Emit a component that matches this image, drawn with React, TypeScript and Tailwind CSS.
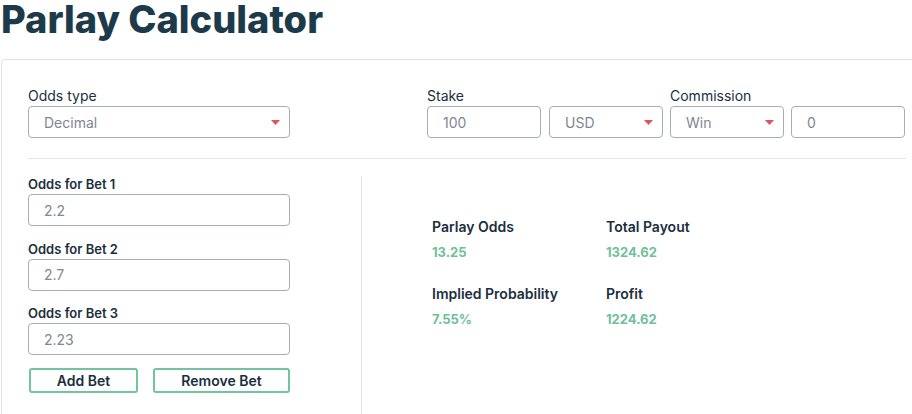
import { useState } from 'react'

const font = { fontFamily: 'Inter, "Noto Sans", sans-serif' }

function Caret() {
  return (
    <svg width="9" height="5" viewBox="0 0 9 5" className="shrink-0">
      <polygon points="0,0 9,0 4.5,5" fill="#e0525e" />
    </svg>
  )
}

function SelectBox({ value, className }: { value: string; className: string }) {
  return (
    <div className={`flex h-[32px] items-center justify-between rounded-[4px] border border-[#a7adb4] pl-[15px] pr-[9px] text-[14px] text-[#7f8791] ${className}`}>
      <span>{value}</span>
      <Caret />
    </div>
  )
}

function TextBox({ value, className }: { value: string; className: string }) {
  return (
    <div className={`flex h-[32px] items-center rounded-[4px] border border-[#a7adb4] pl-[15px] text-[14px] text-[#7f8791] ${className}`}>
      {value}
    </div>
  )
}

export default function App() {
  const [odds] = useState(['2.2', '2.7', '2.23'])

  const results = [
    { label: 'Parlay Odds', value: '13.25' },
    { label: 'Total Payout', value: '1324.62' },
    { label: 'Implied Probability', value: '7.55%' },
    { label: 'Profit', value: '1224.62' },
  ]

  return (
    <div className="h-[414px] w-[912px] overflow-hidden bg-white" style={font}>
      <h1 className="pl-[1px] text-[38px] leading-[38px] font-extrabold text-[#1d3a4b]">
        Parlay Calculator
      </h1>

      <div className="ml-[1px] mt-[21px] w-[940px] rounded-[4px] border border-[#dfe3e7] pl-[26px] pt-[26px]">
        {/* top row */}
        <div className="flex w-[878px] items-start">
          <div className="w-[262px]">
            <div className="text-[14px] leading-[20px] text-[#1b2f3d]">Odds type</div>
            <SelectBox value="Decimal" className="w-[262px]" />
          </div>
          <div className="ml-[137px]">
            <div className="text-[14px] leading-[20px] text-[#1b2f3d]">Stake</div>
            <div className="flex gap-[8px]">
              <TextBox value="100" className="w-[114px]" />
              <SelectBox value="USD" className="w-[114px]" />
            </div>
          </div>
          <div className="ml-[7px]">
            <div className="text-[14px] leading-[20px] text-[#1b2f3d]">Commission</div>
            <div className="flex gap-[7px]">
              <SelectBox value="Win" className="w-[114px]" />
              <TextBox value="0" className="w-[114px]" />
            </div>
          </div>
        </div>

        <div className="mt-[20px] h-px w-[878px] bg-[#e1e5e9]" />

        {/* bottom */}
        <div className="flex pt-[15px]">
          <div className="w-[262px]">
            {odds.map((o, i) => (
              <div key={i} className="mb-[12.5px]">
                <div className="text-[13px] leading-[20px] font-semibold text-[#1b2f3d]">Odds for Bet {i + 1}</div>
                <TextBox value={o} className="w-[262px]" />
              </div>
            ))}
            <div className="ml-[1px] mt-[2px] flex gap-[15px]">
              <button className="h-[25px] w-[109px] rounded-[3px] border-2 border-[#72c4a1] text-[14px] font-semibold text-[#1b2f3d]">
                Add Bet
              </button>
              <button className="h-[25px] w-[137px] rounded-[3px] border-2 border-[#72c4a1] text-[14px] font-semibold text-[#1b2f3d]">
                Remove Bet
              </button>
            </div>
            <div className="h-[40px]" />
          </div>

          <div className="ml-[71px] mt-[2px] border-l border-[#e1e5e9] pl-[70px] pt-[41px]">
            <div className="grid grid-cols-[174px_174px] gap-y-[22px]">
              {results.map(r => (
                <div key={r.label}>
                  <div className="text-[14px] leading-[20px] font-semibold text-[#1b2f3d]">{r.label}</div>
                  <div className="mt-[5px] text-[13px] leading-[20px] font-bold text-[#6fbf9b]">{r.value}</div>
                </div>
              ))}
            </div>
          </div>
        </div>
      </div>
    </div>
  )
}
